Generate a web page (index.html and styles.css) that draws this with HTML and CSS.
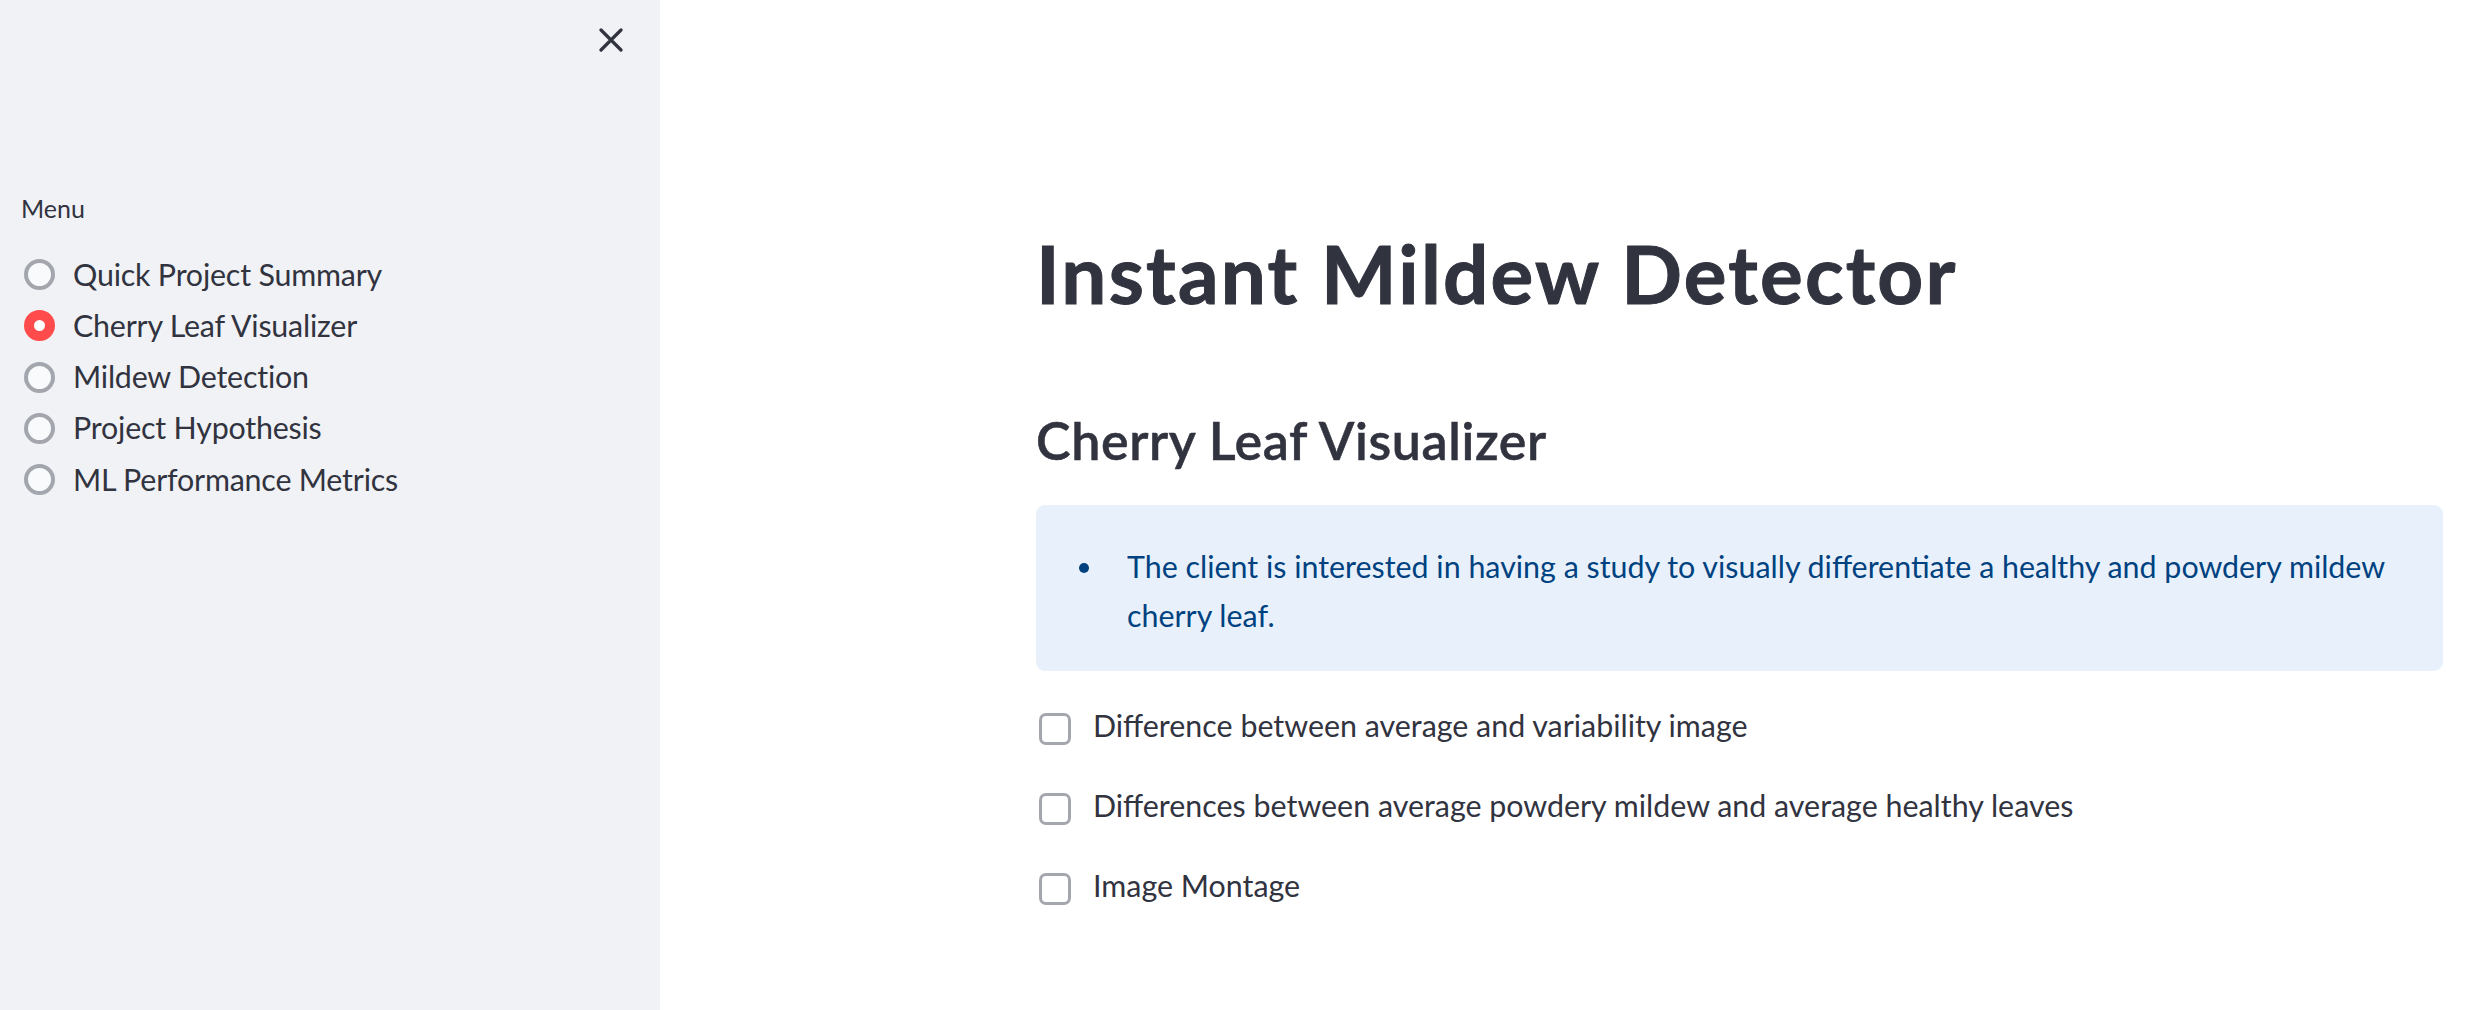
FILE: index.html
```html
<!DOCTYPE html>
<html lang="en">
<head>
<meta charset="utf-8">
<title>Instant Mildew Detector</title>
<link rel="stylesheet" href="styles.css">
</head>
<body>
<div class="app">
  <aside class="sidebar">
    <div class="sidebar-head">
      <button class="close-btn" aria-label="Close sidebar">
        <svg viewBox="0 0 24 24" width="24" height="24"><path d="M2 2 L22 22 M22 2 L2 22" stroke="#31333f" stroke-width="3.2" stroke-linecap="round" fill="none"/></svg>
      </button>
    </div>
    <div class="menu-label">Menu</div>
    <ul class="radio-list">
      <li class="radio-row"><span class="radio"></span><span class="radio-text">Quick Project Summary</span></li>
      <li class="radio-row"><span class="radio radio-on"></span><span class="radio-text">Cherry Leaf Visualizer</span></li>
      <li class="radio-row"><span class="radio"></span><span class="radio-text">Mildew Detection</span></li>
      <li class="radio-row"><span class="radio"></span><span class="radio-text">Project Hypothesis</span></li>
      <li class="radio-row"><span class="radio"></span><span class="radio-text">ML Performance Metrics</span></li>
    </ul>
  </aside>
  <main class="main">
    <div class="content">
      <h1 class="title">Instant Mildew Detector</h1>
      <h2 class="subtitle">Cherry Leaf Visualizer</h2>
      <div class="info">
        <ul class="info-list">
          <li class="info-item"><span class="dot"></span><span class="info-text">The client is interested in having a study to visually differentiate a healthy and powdery mildew cherry leaf.</span></li>
        </ul>
      </div>
      <div class="checks">
        <label class="check-row"><span class="checkbox"></span><span class="check-text">Difference between average and variability image</span></label>
        <label class="check-row"><span class="checkbox"></span><span class="check-text">Differences between average powdery mildew and average healthy leaves</span></label>
        <label class="check-row"><span class="checkbox"></span><span class="check-text">Image Montage</span></label>
      </div>
    </div>
  </main>
</div>
</body>
</html>
```
FILE: styles.css
```css
* { box-sizing: border-box; }
html, body { margin: 0; padding: 0; }
body {
  font-family: "Lato", "Noto Sans", sans-serif;
  color: #31333f;
  background: #ffffff;
}
.app {
  display: flex;
  width: 100%;
  height: 1010px;
  overflow: hidden;
}
.sidebar {
  width: 660px;
  flex: 0 0 660px;
  background: #f0f2f6;
  padding-left: 24px;
}
.sidebar-head {
  display: flex;
  justify-content: flex-end;
  padding-top: 28px;
  padding-right: 37px;
  height: 190px;
}
.close-btn {
  width: 24px;
  height: 24px;
  padding: 0;
  border: none;
  background: transparent;
  display: block;
}
.close-btn svg { display: block; }
.menu-label {
  font-size: 25px;
  line-height: 36px;
  margin-left: -3px;
  height: 36px;
}
.radio-list {
  list-style: none;
  margin: 22.5px 0 0 0;
  padding: 0;
}
.radio-row {
  display: flex;
  align-items: center;
  height: 51.25px;
  font-size: 30.4px;
  line-height: 51.25px;
}
.radio {
  width: 31px;
  height: 31px;
  border-radius: 50%;
  border: 4px solid #a3a6ad;
  background: #f9fafc;
  flex: 0 0 31px;
  margin-right: 18px;
  margin-top: 1px;
  display: flex;
  align-items: center;
  justify-content: center;
}
.radio-on {
  border: none;
  background: #ff4b4b;
}
.radio-on::after {
  content: "";
  width: 11px;
  height: 11px;
  border-radius: 50%;
  background: #ffffff;
}
.radio-text { white-space: nowrap; letter-spacing: -0.2px; }
.main {
  flex: 1 1 auto;
  padding-left: 376px;
  padding-right: 33px;
}
.content {
  width: 1407px;
  padding-top: 225px;
}
.title {
  margin: 0;
  font-size: 80px;
  font-weight: 700;
  line-height: 96px;
  letter-spacing: 2.2px;
  height: 96px;
  -webkit-text-stroke: 1px #31333f;
}
.subtitle {
  margin: 87.7px 0 0 0;
  font-size: 52px;
  font-weight: 600;
  line-height: 62.4px;
  height: 62.4px;
  letter-spacing: 0.6px;
  -webkit-text-stroke: 0.5px #31333f;
}
.info {
  margin-top: 33.9px;
  background: #e8f1fb;
  border-radius: 9px;
  height: 166px;
  padding: 36.75px 35px 0 43px;
  color: #004280;
}
.info-list {
  list-style: none;
  margin: 0;
  padding: 0;
}
.info-item {
  display: flex;
  align-items: flex-start;
  font-size: 30.4px;
  line-height: 49px;
}
.dot {
  width: 10px;
  height: 10px;
  border-radius: 50%;
  background: #004280;
  flex: 0 0 10px;
  margin-top: 21px;
  margin-right: 38px;
}
.checks {
  margin-top: 32.25px;
  display: flex;
  flex-direction: column;
  gap: 36px;
}
.check-row {
  display: flex;
  align-items: flex-start;
  font-size: 30.4px;
  line-height: 44px;
  height: 44px;
}
.checkbox {
  width: 32px;
  height: 32px;
  flex: 0 0 32px;
  border: 3.5px solid #a3a6ad;
  border-radius: 7px;
  background: #ffffff;
  margin-left: 3px;
  margin-top: 9.75px;
  margin-right: 22px;
}
.check-text { white-space: nowrap; }
```
